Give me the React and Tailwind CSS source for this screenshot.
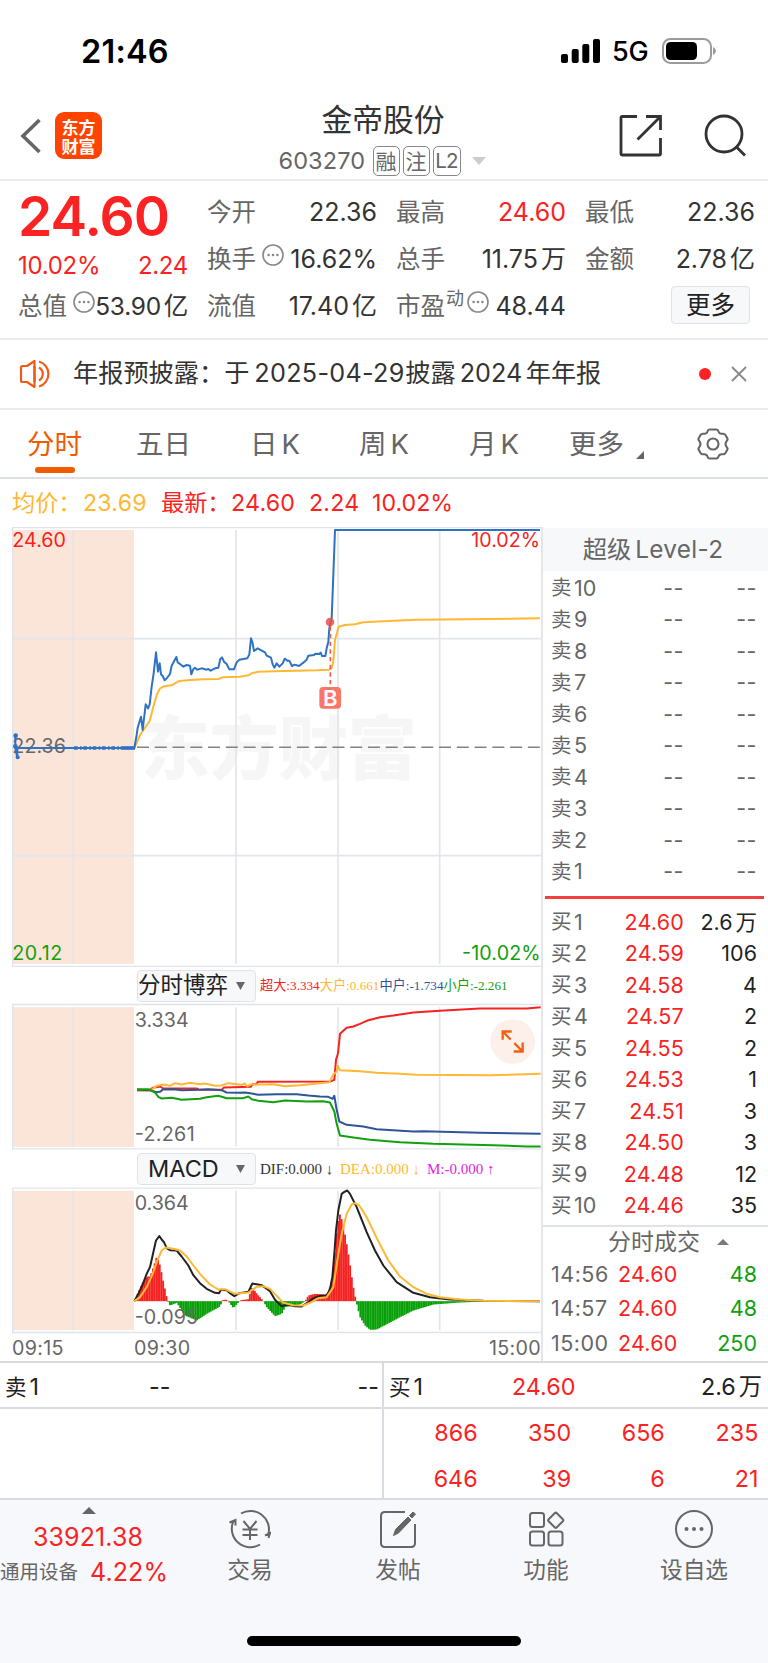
import React from 'react';
import clsx from 'clsx';

const sellRows = [10, 9, 8, 7, 6, 5, 4, 3, 2, 1];

const buyRows = [
  { level: 1, price: '24.60', volume: '2.6万' },
  { level: 2, price: '24.59', volume: '106' },
  { level: 3, price: '24.58', volume: '4' },
  { level: 4, price: '24.57', volume: '2' },
  { level: 5, price: '24.55', volume: '2' },
  { level: 6, price: '24.53', volume: '1' },
  { level: 7, price: '24.51', volume: '3' },
  { level: 8, price: '24.50', volume: '3' },
  { level: 9, price: '24.48', volume: '12' },
  { level: 10, price: '24.46', volume: '35' },
];

const trades = [
  { time: '14:56', price: '24.60', volume: '48' },
  { time: '14:57', price: '24.60', volume: '48' },
  { time: '15:00', price: '24.60', volume: '250' },
];

const queue = [
  ['866', '350', '656', '235'],
  ['646', '39', '6', '21'],
];

// chart geometry uses 3 units per pixel
const pricePath =
  '46,660 46,700 52,728 52,699 403,699 410,660 413,638 423,605 428,645 437,568 444,580 449,568 455,515 461,475 468,412 474,470 479,445 483,478 488,483 494,496 500,490 510,477 515,452 529,426 533,442 540,447 550,455 560,450 570,452 574,478 580,462 585,458 592,464 605,460 620,464 625,462 632,467 645,460 655,458 661,432 666,427 672,440 680,447 688,463 702,463 710,442 718,434 742,430 748,418 753,370 758,385 762,408 773,400 795,412 800,422 813,428 818,448 823,458 830,445 838,455 848,445 854,431 862,437 868,437 876,453 884,449 897,453 910,443 920,434 925,422 942,420 946,416 958,417 962,413 966,423 976,423 980,400 985,380 988,340 995,310 1000,180 1005,45 1620,45';
const averagePath =
  '403,699 420,660 449,618 460,575 470,540 480,520 492,514 515,511 525,505 535,499 560,496 610,493 655,492 668,487 720,485 745,481 755,475 775,470 850,468 950,466 988,464 995,458 1000,440 1005,375 1016,335 1035,330 1065,328 1090,322 1150,319 1250,314 1400,313 1620,310';

const flows = [
  {
    color: '#f52222',
    points:
      '411,392 450,390 458,384 480,380 490,386 590,386 600,390 665,390 672,383 752,381 758,373 770,373 773,366 990,365 1003,360 1008,300 1014,280 1020,222 1040,204 1060,200 1080,192 1100,183 1140,172 1180,167 1240,158 1320,153 1440,146 1580,146 1622,142',
  },
  {
    color: '#ffb833',
    points:
      '411,393 450,393 470,378 490,374 510,378 525,370 545,374 570,369 600,373 615,371 645,378 665,377 685,370 725,375 735,371 742,380 750,374 800,374 820,373 855,379 900,376 960,370 988,367 1000,344 1010,335 1013,318 1020,331 1080,334 1130,339 1200,342 1250,345 1470,346 1622,342',
  },
  {
    color: '#2f5597',
    points:
      '411,390 450,391 470,397 482,395 488,389 520,388 545,391 600,390 625,388 665,391 680,398 715,399 735,398 760,402 775,405 830,403 890,403 925,407 960,410 985,411 998,417 1003,408 1010,450 1018,485 1040,495 1090,500 1130,508 1240,515 1270,514 1440,519 1622,522',
  },
  {
    color: '#10a010',
    points:
      '411,388 445,388 465,398 475,411 485,416 515,414 545,420 600,417 620,412 655,408 680,415 730,415 745,410 755,418 775,423 820,427 855,422 920,425 970,424 990,428 1003,455 1010,492 1020,527 1060,533 1110,540 1200,547 1300,552 1480,556 1580,560 1622,560',
  },
];

const difPath =
  '403,452 415,430 428,402 440,370 450,350 460,305 468,270 478,257 485,267 492,275 500,293 510,299 530,300 545,318 565,345 580,374 600,398 620,415 645,427 657,428 663,418 680,419 690,428 703,437 718,428 745,424 757,399 785,404 810,422 825,448 845,467 862,462 885,467 905,468 925,455 940,443 960,436 980,436 990,415 997,380 1003,310 1008,240 1015,180 1025,130 1032,125 1042,120 1050,130 1070,170 1100,245 1125,300 1150,345 1190,395 1240,427 1290,440 1350,447 1450,451 1620,452';
const deaPath =
  '403,452 420,440 440,410 458,370 470,335 485,300 497,291 520,295 540,300 560,318 580,345 600,370 630,402 655,417 675,416 705,430 745,426 770,409 790,407 810,415 830,436 850,457 880,464 910,465 935,455 955,443 980,440 1000,410 1012,330 1025,250 1040,190 1055,162 1065,158 1078,165 1100,200 1130,262 1165,330 1200,378 1240,410 1280,430 1320,440 1380,447 1450,451 1620,452';
const histogram = [
  [403, 452], [428, 395], [440, 378], [450, 378], [460, 350], [470, 318], [480, 345], [490, 395], [500, 440],
  [503, 452], [510, 465], [530, 457], [540, 472], [555, 495], [590, 510], [620, 490], [660, 468], [668, 448],
  [680, 448], [685, 452], [700, 473], [718, 452], [722, 449], [745, 446], [755, 410], [775, 435], [790, 452],
  [800, 470], [825, 497], [845, 490], [855, 470], [900, 462], [915, 452], [925, 435], [945, 430], [975, 432],
  [985, 425], [995, 390], [1003, 320], [1010, 240], [1018, 188], [1028, 215], [1038, 270], [1048, 330],
  [1058, 400], [1068, 452], [1080, 500], [1095, 525], [1110, 538], [1130, 537], [1200, 500], [1240, 480],
  [1300, 462], [1380, 456], [1450, 453], [1620, 452],
];

const ZERO = 452;

function valueAt(x) {
  const i = histogram.findIndex((p) => p[0] > x);
  if (i < 1) return ZERO;
  const [x0, y0] = histogram[i - 1];
  const [x1, y1] = histogram[i];
  return y0 + ((x - x0) / (x1 - x0)) * (y1 - y0);
}

const bars = [];
for (let x = 405; x < 1600; x += 5.1) bars.push({ x, y: valueAt(x + 2.5) });

function Grid({ top, bottom, frameTop, frameBottom }) {
  return (
    <>
      <rect x="38" y={top} width="364" height={bottom - top} fill="#fbe5d8" />
      <g stroke="#e2e5eb" strokeWidth="5">
        {[219, 708, 1014, 1319].map((x) => (
          <line key={x} x1={x} x2={x} y1={top} y2={bottom} />
        ))}
      </g>
      <g stroke="#e0e3e9" strokeWidth="4">
        <line x1="38" x2="38" y1={frameTop} y2={frameBottom} />
        <line x1="36" x2="1626" y1={frameTop} y2={frameTop} />
        <line x1="36" x2="1626" y1={frameBottom} y2={frameBottom} />
      </g>
    </>
  );
}

function Label({ x, y, fill = '#666666', anchor = 'start', length, children }) {
  return (
    <text x={x} y={y} fill={fill} textAnchor={anchor} textLength={length} fontSize="59">
      {children}
    </text>
  );
}

// number followed by a slightly detached 万 / 亿 unit
function Amount({ value }) {
  const unit = value.match(/[万亿]$/);
  if (!unit) return value;
  return (
    <>
      {value.slice(0, -1)}
      <span className="ml-[3px]">{unit[0]}</span>
    </>
  );
}

function PriceChart() {
  return (
    <svg viewBox="36 36 1590 1320" className="block h-[440px] w-[530px] shrink-0">
      <text x="422" y="778" fontSize="207" fontWeight="900" fill="#f6f6f6" fontFamily="Noto Sans CJK SC">
        东方财富
      </text>
      <Grid top={45} bottom={1347} frameTop={38} frameBottom={1354} />
      <g stroke="#e2e5eb" strokeWidth="5">
        <line x1="38" x2="1626" y1="371" y2="371" />
        <line x1="38" x2="1626" y1="1022" y2="1022" />
      </g>
      <line x1="403" x2="1620" y1="697" y2="697" stroke="#828282" strokeWidth="4.500" strokeDasharray="36 17.3" strokeDashoffset="-8" />
      <Label x="37" y="97" fill="#f52222" length="161">24.60</Label>
      <Label x="1620" y="97" fill="#f52222" anchor="end" length="206">10.02%</Label>
      <Label x="37" y="715" length="161">22.36</Label>
      <Label x="37" y="1336" fill="#10a010" length="150">20.12</Label>
      <Label x="1622" y="1336" fill="#10a010" anchor="end" length="236">-10.02%</Label>
      <polyline points={averagePath} fill="none" stroke="#ffb833" strokeWidth="6" strokeLinejoin="round" />
      <polyline points={pricePath} fill="none" stroke="#2e72c4" strokeWidth="6" strokeLinejoin="round" />
      <line x1="222" x2="372" y1="699" y2="699" stroke="#2e72c4" strokeWidth="10" strokeDasharray="11 7 5 5" />
      <line x1="372" x2="405" y1="699" y2="699" stroke="#2e72c4" strokeWidth="11" />
      <circle cx="47" cy="662" r="7" fill="#2e72c4" />
      <circle cx="46" cy="694" r="7" fill="#2e72c4" />
      <circle cx="53" cy="727" r="6" fill="#2e72c4" />
      <line x1="991" x2="991" y1="334" y2="516" stroke="#fb5a4a" strokeWidth="5" strokeDasharray="13 10" />
      <circle cx="990" cy="321" r="13" fill="#e8504a" opacity="0.85" />
      <rect x="958" y="516" width="65" height="65" rx="11" fill="#fc7668" />
      <text x="991" y="572" fontSize="66" fontWeight="600" fill="#ffffff" textAnchor="middle">B</text>
    </svg>
  );
}

function FlowChart() {
  return (
    <svg viewBox="36 130 1590 440" className="block h-[147px] w-[530px] shrink-0">
      <Grid top={142} bottom={561} frameTop={134} frameBottom={567} />
      <Label x="404" y="201" length="162">3.334</Label>
      <Label x="404" y="544" length="180">-2.261</Label>
      {flows.map((flow) => (
        <polyline key={flow.color} points={flow.points} fill="none" stroke={flow.color} strokeWidth="6" strokeLinejoin="round" />
      ))}
      <circle cx="1538" cy="245" r="67" fill="#fdf0ea" />
      <g fill="none" stroke="#f2600f" strokeWidth="7">
        <path d="M1508 240V215H1535M1508 215L1532 239M1543 250L1568 275M1568 248V275H1541" />
      </g>
    </svg>
  );
}

function MacdChart() {
  return (
    <svg viewBox="36 110 1590 440" className="block h-[147px] w-[530px] shrink-0">
      <Grid top={121} bottom={539} frameTop={113} frameBottom={546} />
      {bars.map((bar) => (
        <rect
          key={bar.x}
          x={bar.x}
          y={Math.min(bar.y, ZERO)}
          width="5.6"
          height={Math.max(1, Math.abs(bar.y - ZERO))}
          fill={bar.y < ZERO ? '#f52222' : '#08a008'}
        />
      ))}
      <polyline points={difPath} fill="none" stroke="#222222" strokeWidth="6" strokeLinejoin="round" />
      <polyline points={deaPath} fill="none" stroke="#ffb833" strokeWidth="6" strokeLinejoin="round" />
      <Label x="404" y="179" length="162">0.364</Label>
      <Label x="404" y="521" length="190">-0.095</Label>
    </svg>
  );
}

function MoreDot({ className }) {
  return (
    <svg viewBox="0 0 22 22" className={clsx('size-[22px]', className)}>
      <circle cx="11" cy="11" r="10" fill="none" stroke="#888" strokeWidth="1.6" />
      <circle cx="6.6" cy="11" r="1.3" fill="#888" />
      <circle cx="11" cy="11" r="1.3" fill="#888" />
      <circle cx="15.4" cy="11" r="1.3" fill="#888" />
    </svg>
  );
}

function StatusBar() {
  return (
    <div className="flex h-[102px] shrink-0 items-center pl-[81px] text-black">
      <span className="w-[480px] pt-[2px] text-[32.500px] font-semibold tracking-[0.200px]">21:46</span>
      <svg viewBox="0 0 39 24" className="h-6 w-[39px]">
        <rect y="15" width="7" height="9" rx="2" />
        <rect x="10.7" y="10" width="7" height="14" rx="2" />
        <rect x="21.3" y="5" width="7" height="19" rx="2" />
        <rect x="32" y="0" width="7" height="24" rx="2" />
      </svg>
      <span className="ml-[12px] w-[50px] pt-[2px] text-[27px] font-medium tracking-[-0.300px]">5G</span>
      <svg viewBox="0 0 55 26" className="h-[26px] w-[55px]">
        <rect x="1" y="1" width="48" height="24" rx="7.5" fill="none" stroke="#9b9b9b" strokeWidth="2" />
        <rect x="4" y="4" width="31" height="18" rx="4.5" />
        <path d="M51 9q3 1.500 3 4t-3 4z" fill="#9b9b9b" />
      </svg>
    </div>
  );
}

function Header() {
  return (
    <div className="flex h-[79px] shrink-0 border-b-2 border-[#ebebeb]">
      <div className="flex w-[250px] items-start pl-[20px] pt-[10px]">
        <svg viewBox="0 0 22 36" className="mt-[6px] h-9 w-[22px]" fill="none" stroke="#666" strokeWidth="3.6">
          <path d="M19.500 2L3 18l16.500 16" />
        </svg>
        <div className="ml-[13px] flex h-[47px] w-[47px] flex-col items-center justify-center rounded-[9px] bg-[#ff4400] font-['Noto_Sans_CJK_SC'] text-[17px] font-bold leading-[19px] text-white">
          <span>东方</span>
          <span>财富</span>
        </div>
      </div>
      <div className="flex w-[268px] flex-col items-center">
        <div className="ml-[-2px] h-[44px] text-[30.800px] leading-[36px] text-[#333]">金帝股份</div>
        <div className="ml-[-4px] flex items-center gap-[3px] text-[#666]">
          <span className="mr-[4px] w-[87px] text-[23.500px] leading-[30px] tracking-[0.100px]">603270</span>
          <span className="flex h-[30px] w-[27px] items-center justify-center rounded-[5px] border-[1.500px] border-[#888] text-[21px] leading-none">融</span>
          <span className="flex h-[30px] w-[27px] items-center justify-center rounded-[5px] border-[1.500px] border-[#888] text-[21px] leading-none">注</span>
          <span className="flex h-[30px] w-[28px] items-center justify-center rounded-[5px] border-[1.500px] border-[#888] text-[20.500px] leading-none tracking-[-0.800px]">L2</span>
          <svg viewBox="0 0 14 8" className="ml-[8px] h-2 w-[14px]" fill="#ccc">
            <path d="M0 0h14l-7 8z" />
          </svg>
        </div>
      </div>
      <div className="flex items-start pl-[101px] pt-[12px]">
        <svg viewBox="0 0 44 44" className="h-11 w-11" fill="none" stroke="#333" strokeWidth="2.8">
          <path d="M18 2.500H3.500a1.500 1.500 0 0 0-1.500 1.500v35.500a1.500 1.500 0 0 0 1.500 1.500H40a1.500 1.500 0 0 0 1.500-1.500V24M27 2.500h14.500V16M41.500 2.500L18.500 25.500" />
        </svg>
        <svg viewBox="0 0 44 44" className="ml-[41px] h-11 w-11" fill="none" stroke="#333" strokeWidth="2.8">
          <circle cx="20" cy="20" r="18" />
          <path d="M32.500 33l8.500 8.500" />
        </svg>
      </div>
    </div>
  );
}

function Stat({ label, value, red, children }) {
  return (
    <div className="flex h-[47px] w-[170px] items-center text-[25px] leading-none">
      <span className="text-[24.500px] text-[#666]">{label}</span>
      {children}
      <span className={clsx('ml-auto whitespace-nowrap', red ? 'text-[#fa2222]' : 'text-[#333]')}>
        <Amount value={value} />
      </span>
    </div>
  );
}

function Quote() {
  return (
    <div className="flex h-[159px] shrink-0 border-b-2 border-[#ebebeb] pl-[18px] pt-[8px]">
      <div className="w-[189px]">
        <div className="flex h-[54px] items-center text-[55px] font-semibold leading-none tracking-[-0.900px] text-[#fa2222]">24.60</div>
        <div className="flex h-[40px] w-[170px] items-center justify-between pt-[5px] text-[24px] leading-none tracking-[-0.300px] text-[#fa2222]">
          <span>10.02%</span>
          <span>2.24</span>
        </div>
        <div className="flex h-[47px] w-[170px] items-center text-[24.500px] leading-none">
          <span className="text-[#666]">总值</span>
          <MoreDot className="mb-2.5 ml-[6px] shrink-0" />
          <span className="ml-auto whitespace-nowrap tracking-[-0.300px] text-[#333]">
            <Amount value="53.90亿" />
          </span>
        </div>
      </div>
      <div className="grid grid-cols-[189px_189px_170px] content-start">
        <Stat label="今开" value="22.36" />
        <Stat label="最高" value="24.60" red />
        <Stat label="最低" value="22.36" />
        <Stat label="换手" value="16.62%">
          <MoreDot className="mb-2.5 ml-[6px] shrink-0" />
        </Stat>
        <Stat label="总手" value="11.75万" />
        <Stat label="金额" value="2.78亿" />
        <Stat label="流值" value="17.40亿" />
        <Stat label="市盈" value="48.44">
          <span className="mb-4 ml-px text-[18px] text-[#666]">动</span>
          <MoreDot className="mb-2.5 ml-[3px] shrink-0" />
        </Stat>
        <div className="ml-[86px] mt-[3px] flex h-[38px] w-[79px] items-center justify-center rounded-[4px] border border-[#dfe2e8] bg-[#f7f8fa] text-[24.500px] leading-none text-[#222]">
          更多
        </div>
      </div>
    </div>
  );
}

function Notice() {
  return (
    <div className="flex h-[70px] shrink-0 items-center border-b-2 border-[#ebebeb] pl-[19px]">
      <svg viewBox="0 0 34 30" className="h-[30px] w-[34px]" fill="none" stroke="#f05a14" strokeWidth="2.200" strokeLinejoin="round">
        <path d="M15.500 2v26L8 23H3.500q-1.500 0-1.500-1.500v-13Q2 7 3.500 7H8z" />
        <path d="M15.500 7v16" />
        <path d="M20 8.500a7.500 7.500 0 0 1 0 13M20 2.500a13 13 0 0 1 0 25" />
      </svg>
      <div className="ml-[20px] flex w-[626px] items-center whitespace-nowrap text-[25.200px] leading-none text-[#333]">
        <span>年报预披露：于</span>
        <span className="ml-[5px] w-[151px] tracking-[0.300px]">2025-04-29</span>
        <span>披露</span>
        <span className="ml-[4px] w-[66px]">2024</span>
        <span>年年报</span>
      </div>
      <span className="size-3 rounded-full bg-[#fa2222]" />
      <svg viewBox="0 0 16 16" className="ml-[20px] size-4" stroke="#888" strokeWidth="1.8">
        <path d="M1 1l14 14M15 1L1 15" />
      </svg>
    </div>
  );
}

function Tabs() {
  return (
    <div className="flex h-[69px] shrink-0 border-b-2 border-[#dcdfe5] text-[27.500px] leading-[68px] text-[#666]">
      <div className="flex w-[110px] flex-col items-center text-[#f05a00]">
        <span className="h-[57px] pr-px">分时</span>
        <span className="h-[6px] w-10 shrink-0 rounded-full bg-[#f05a00]" />
      </div>
      <span className="w-[107px] text-center">五日</span>
      <span className="w-[116px] text-center">日<span className="ml-1">K</span></span>
      <span className="w-[102px] text-center">周<span className="ml-1">K</span></span>
      <span className="w-[118px] text-center">月<span className="ml-1">K</span></span>
      <span className="ml-[16px] w-[67px]">更多</span>
      <svg viewBox="0 0 8 8" className="mt-[41px] size-2" fill="#666">
        <path d="M8 0v8H0z" />
      </svg>
      <svg viewBox="0 0 32 32" className="ml-[53px] mt-[18px] size-8" fill="none" stroke="#666" strokeWidth="2.1" strokeLinejoin="round">
        <path d="M12.500 1.500h7q1.500 0 2 2 .800 2.500 3.500 2.300 2.500-.400 3.300 1l2 3.500q.700 1.200-.500 2.500-2.500 3.200 0 6.400 1.200 1.300.500 2.500l-2 3.500q-.800 1.400-3.300 1-2.700-.200-3.500 2.300-.500 2-2 2h-7q-1.500 0-2-2-.800-2.500-3.500-2.300-2.500.400-3.300-1l-2-3.500q-.700-1.200.500-2.500 2.500-3.200 0-6.400-1.200-1.300-.500-2.500l2-3.500q.800-1.400 3.300-1 2.700.200 3.500-2.300.500-2 2-2z" />
        <circle cx="16" cy="16" r="5.5" />
      </svg>
    </div>
  );
}

function Legend() {
  return (
    <div className="flex h-[48px] shrink-0 items-center pl-[12px] pt-px text-[23.200px] leading-none text-[#fa2222]">
      <span className="w-[71px] whitespace-nowrap text-[#ffb833]">均价：</span>
      <span className="w-[78px] tracking-[0.200px] text-[#ffb833]">23.69</span>
      <span className="w-[70px] whitespace-nowrap">最新：</span>
      <span className="w-[78px] tracking-[0.200px]">24.60</span>
      <span className="w-[63px] tracking-[0.200px]">2.24</span>
      <span>10.02%</span>
    </div>
  );
}

function Picker({ children, className }) {
  return (
    <div className={clsx('flex h-[32px] w-[119px] shrink-0 items-center rounded-[4px] border border-[#dfe2e8] bg-[#f7f8fa] leading-none text-[#222]', className)}>
      <span className="whitespace-nowrap">{children}</span>
      <svg viewBox="0 0 9 8" className="ml-auto mr-[10px] h-2 w-[9px]" fill="#666">
        <path d="M0 0h9L4.500 8z" />
      </svg>
    </div>
  );
}

function Charts() {
  return (
    <div className="flex w-[541px] flex-col pl-[12px]">
      <PriceChart />
      <div className="flex h-[36px] shrink-0 items-center pl-[125px] pt-px">
        <Picker className="text-[22.500px]">分时博弈</Picker>
        <div className="ml-[4px] whitespace-nowrap font-['Liberation_Serif','Noto_Sans_CJK_SC',serif] text-[13.200px] leading-none">
          <span className="text-[#f52222]">超大:3.334</span>
          <span className="text-[#ffb833]">大户:0.661</span>
          <span className="text-[#2f5597]">中户:-1.734</span>
          <span className="text-[#10a010]">小户:-2.261</span>
        </div>
      </div>
      <FlowChart />
      <div className="flex h-[37px] shrink-0 items-center pl-[125px] pt-px">
        <Picker className="pl-[10px] text-[23.500px]">MACD</Picker>
        <div className="ml-[4px] flex whitespace-nowrap font-['Liberation_Serif',serif] text-[15px] leading-none">
          <span className="w-[80px] text-[#333]">DIF:0.000 ↓</span>
          <span className="w-[87px] text-[#ffb833]">DEA:0.000 ↓</span>
          <span className="text-[#e022e6]">M:-0.000 ↑</span>
        </div>
      </div>
      <MacdChart />
      <div className="flex h-[27px] shrink-0 items-center pt-[2px] text-[19.700px] leading-none tracking-[0.300px] text-[#666]">
        <span className="w-[122px]">09:15</span>
        <span>09:30</span>
        <span className="ml-auto">15:00</span>
      </div>
    </div>
  );
}

function LevelName({ side, level }) {
  return (
    <span className="flex w-[60px] items-center text-[#666]">
      <span className="w-[23px] text-[20.500px]">{side}</span>
      {level}
    </span>
  );
}

function OrderBook() {
  return (
    <div className="flex w-[227px] flex-col border-l-2 border-[#e4e6eb] leading-none">
      <div className="mt-px flex h-[43px] shrink-0 items-center justify-center bg-[#f7f8fa] pr-[5px] text-[24.300px] text-[#666]">
        超级<span className="ml-1 tracking-[0.300px]">Level-2</span>
      </div>
      <div className="flex flex-col pt-[1px]">
        {sellRows.map((level) => (
          <div key={level} className="flex h-[31.500px] items-center pl-[8px] pr-[11px] pt-px text-[21.500px] text-[#666]">
            <LevelName side="卖" level={level} />
            <span className="w-[73px] text-right tracking-[0.500px]">--</span>
            <span className="ml-auto tracking-[0.500px]">--</span>
          </div>
        ))}
      </div>
      <div className="ml-[2px] mt-[9px] h-[3px] w-[219px] shrink-0 bg-[#f04040]" />
      <div className="mt-[7px] flex flex-col">
        {buyRows.map((row) => (
          <div key={row.level} className="flex h-[31.500px] items-center pl-[8px] pr-[11px] pt-px text-[21.500px]">
            <LevelName side="买" level={row.level} />
            <span className="w-[73px] text-right tracking-[0.200px] text-[#fa2222]">{row.price}</span>
            <span className="ml-auto whitespace-nowrap text-[#222]">
              <Amount value={row.volume} />
            </span>
          </div>
        ))}
      </div>
      <div className="mt-[4px] flex h-[32px] shrink-0 items-center border-t-2 border-[#e0e3e9] pl-[65px] text-[23px] text-[#666]">
        分时成交
        <svg viewBox="0 0 12 6" className="ml-[17px] h-1.5 w-3" fill="#77777f">
          <path d="M0 6h12L6 0z" />
        </svg>
      </div>
      {trades.map((trade) => (
        <div key={trade.time} className="flex h-[34.700px] shrink-0 items-center pl-[8px] pr-[11px] text-[21.500px]">
          <span className="w-[67px] tracking-[0.500px] text-[#666]">{trade.time}</span>
          <span className="tracking-[0.200px] text-[#fa2222]">{trade.price}</span>
          <span className="ml-auto text-[#10a010]">{trade.volume}</span>
        </div>
      ))}
    </div>
  );
}

function Queue() {
  return (
    <div className="flex h-[139px] shrink-0 flex-col border-y-2 border-[#d8dbe1] text-[23.300px] leading-none">
      <div className="flex h-[46px] shrink-0 border-b-2 border-[#d8dbe1] text-[#222]">
        <div className="flex w-[384px] items-center border-r-2 border-[#d8dbe1] pl-[5px] pr-[3px] pt-1">
          <span className="w-[144px]"><span className="mr-[3px] text-[21.500px]">卖</span>1</span>
          <span>--</span>
          <span className="ml-auto">--</span>
        </div>
        <div className="flex flex-1 items-center pl-[5px] pr-[6px] pt-1">
          <span className="w-[123px]"><span className="mr-[3px] text-[21.500px]">买</span>1</span>
          <span className="text-[#fa2222]">24.60</span>
          <span className="ml-auto">
            <Amount value="2.6万" />
          </span>
        </div>
      </div>
      <div className="flex flex-1">
        <div className="w-[384px] border-r-2 border-[#d8dbe1]" />
        <div className="flex flex-1 flex-col text-[#fa2222]">
          {queue.map((row) => (
            <div key={row[0]} className="flex h-[46px] items-center pt-px text-right">
              {row.map((n) => (
                <span key={n} className="w-[93.600px]">{n}</span>
              ))}
            </div>
          ))}
        </div>
      </div>
    </div>
  );
}

function NavItem({ label, children }) {
  return (
    <div className="flex w-[148px] flex-col items-center pt-[9px] text-[22.700px] leading-none text-[#666]">
      <svg viewBox="0 0 42 40" className="h-10 w-[42px]" fill="none" stroke="#666" strokeWidth="2">
        {children}
      </svg>
      <span className="mt-[10px]">{label}</span>
    </div>
  );
}

function BottomBar() {
  return (
    <div className="flex flex-1 flex-col bg-[#f7f8fb]">
      <div className="flex h-[136px]">
        <div className="flex w-[176px] flex-col leading-none text-[#fa2222]">
          <svg viewBox="0 0 14 7" className="ml-[82px] mt-[7px] h-[7px] w-[14px]" fill="#666">
            <path d="M0 7h14L7 0z" />
          </svg>
          <span className="ml-[33px] mt-[11px] text-[25px] tracking-[0.100px]">33921.38</span>
          <div className="mt-[10px] flex items-center">
            <span className="w-[90px] text-[19.500px] text-[#666]">通用设备</span>
            <span className="text-[25px] tracking-[0.100px]">4.22%</span>
          </div>
        </div>
        <NavItem label="交易">
          <path d="M12 4.500A18.500 18.500 0 0 1 39.500 24.500M39.500 29l1.500-5-5 2.500M31 35.500A18.500 18.500 0 0 1 4.500 12M.500 13.500L6.500 11v5.500" />
          <path d="M14.500 12l6.500 8 6.500-8M21 20v11M13.500 20.500h15M13.500 26h15" />
        </NavItem>
        <NavItem label="发帖">
          <path d="M28 3H8q-4 0-4 4v27q0 4 4 4h26q4 0 4-4V15" />
          <path d="M16.500 26.500l2-6L31 8l3 3-12.500 13zM32.500 6.500L36 3l2.500 2L35 9z" fill="#666" strokeWidth="1" />
        </NavItem>
        <NavItem label="功能">
          <rect x="5" y="4" width="14" height="14" rx="2.5" />
          <rect x="5" y="22.5" width="14" height="14" rx="2.5" />
          <rect x="23.5" y="22.5" width="14" height="14" rx="2.5" />
          <rect x="25" y="5.5" width="11.5" height="11.5" rx="1.5" transform="rotate(45 30.750 11.250)" />
        </NavItem>
        <NavItem label="设自选">
          <circle cx="21" cy="20" r="18" />
          <g fill="#666" stroke="none">
            <circle cx="13.5" cy="20" r="2" />
            <circle cx="21" cy="20" r="2" />
            <circle cx="28.5" cy="20" r="2" />
          </g>
        </NavItem>
      </div>
      <div className="ml-[247px] h-[10px] w-[274px] rounded-full bg-black" />
    </div>
  );
}

export default function App() {
  return (
    <div className="flex h-[1663px] w-[768px] flex-col overflow-hidden bg-white font-['Inter','Noto_Sans_CJK_SC',sans-serif]">
      <StatusBar />
      <Header />
      <Quote />
      <Notice />
      <Tabs />
      <Legend />
      <div className="flex h-[834px] shrink-0">
        <Charts />
        <OrderBook />
      </div>
      <Queue />
      <BottomBar />
    </div>
  );
}
